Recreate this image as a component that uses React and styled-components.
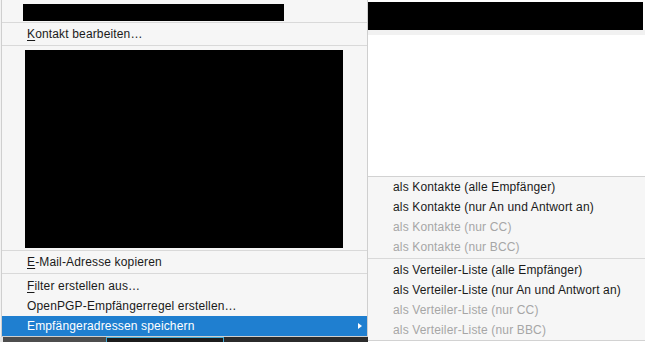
import React from "react";
import styled, { createGlobalStyle } from "styled-components";

const GlobalStyle = createGlobalStyle`
  html, body {
    margin: 0;
    background: #ffffff;
    overflow: hidden;
  }
  body {
    font-family: "Liberation Sans", Arial, sans-serif;
    font-size: 12px;
    letter-spacing: 0.15px;
  }
`;

const Screen = styled.div`
  display: flex;
  width: 645px;
  height: 342px;
  overflow: hidden;
`;

const LeftColumn = styled.div`
  display: flex;
  flex-direction: column;
  width: 368px;
  flex-shrink: 0;
`;

const MenuHolder = styled.div`
  display: flex;
  padding-left: 1px;
  background: #f2f2f2;
`;

const Menu = styled.div`
  box-sizing: border-box;
  width: 367px;
  background: #f6f6f6;
  border: 1px solid #cfcfcf;
  border-top: none;
  display: flex;
  flex-direction: column;
`;

const Item = styled.div`
  display: flex;
  align-items: center;
  height: 20px;
  padding-left: ${(p) => p.$indent || 25}px;
  color: ${(p) => (p.$active ? "#ffffff" : p.$disabled ? "#a6a6a6" : "#1a1a1a")};
  background: ${(p) => (p.$active ? "#1f7fd0" : "transparent")};
  white-space: nowrap;
`;

const Key = styled.span`
  text-decoration: underline;
  text-underline-offset: 2px;
`;

const Arrow = styled.span`
  margin-left: auto;
  margin-right: 5px;
  width: 0;
  height: 0;
  border-left: 4px solid #ffffff;
  border-top: 3px solid transparent;
  border-bottom: 3px solid transparent;
`;

const Separator = styled.div`
  height: 1px;
  margin: 1px 0;
  background: #d9d9d9;
`;

const RedactedRow = styled.div`
  height: 21px;
  box-sizing: border-box;
  padding: 4px 0 0 21px;
`;

const Redacted = styled.div`
  width: ${(p) => p.$w}px;
  height: ${(p) => p.$h}px;
  background: #000000;
`;

const PreviewRow = styled.div`
  padding: 3px 0 1px 23px;
`;

const Group = styled.div`
  padding-top: 1px;
`;

const DarkStrip = styled.div`
  display: flex;
  height: 5px;
  background: #2a2a2a;
`;

const StripPart = styled.div`
  width: ${(p) => p.$w}px;
  background: ${(p) => p.$bg};
  box-sizing: border-box;
  border: ${(p) => (p.$outline ? `1px solid ${p.$outline}` : "none")};
  border-bottom: none;
`;

const RightColumn = styled.div`
  flex: 1;
  display: flex;
  flex-direction: column;
  background: #ffffff;
  min-width: 0;
`;

const CutText = styled.div`
  height: 2px;
  overflow: hidden;
  color: #777777;
  font-size: 12px;
  line-height: 12px;
  padding-left: 4px;
  white-space: nowrap;

  span {
    display: block;
    margin-top: -10px;
  }
`;

const HeaderBar = styled.div`
  height: 28px;
  margin-right: 2px;
  background: #000000;
`;

const HeaderShade = styled.div`
  height: 5px;
  background: #f1f1f1;
`;

const Blank = styled.div`
  height: 141px;
`;

const Submenu = styled.div`
  background: #f6f6f6;
  border-top: 1px solid #d2d2d2;
  border-bottom: 1px solid #d2d2d2;
`;

const saveTargets = [
  { label: "als Kontakte (alle Empfänger)" },
  { label: "als Kontakte (nur An und Antwort an)" },
  { label: "als Kontakte (nur CC)", disabled: true },
  { label: "als Kontakte (nur BCC)", disabled: true },
];

const listTargets = [
  { label: "als Verteiler-Liste (alle Empfänger)" },
  { label: "als Verteiler-Liste (nur An und Antwort an)" },
  { label: "als Verteiler-Liste (nur CC)", disabled: true },
  { label: "als Verteiler-Liste (nur BBC)", disabled: true },
];

const App = () => {
  return (
    <>
      <GlobalStyle />
      <Screen>
        <LeftColumn>
          <MenuHolder>
            <Menu>
              <RedactedRow>
                <Redacted $w={261} $h={17} />
              </RedactedRow>
              <Separator />
              <Item>
                <Key>K</Key>ontakt bearbeiten…
              </Item>
              <Separator />
              <PreviewRow>
                <Redacted $w={318} $h={198} />
              </PreviewRow>
              <Separator />
              <Item>
                <Key>E</Key>-Mail-Adresse kopieren
              </Item>
              <Separator />
              <Group>
                <Item>
                  <Key>F</Key>ilter erstellen aus…
                </Item>
                <Item>OpenPGP-Empfängerregel erstellen…</Item>
                <Item $active>
                  Empfängeradressen speichern
                  <Arrow />
                </Item>
              </Group>
            </Menu>
          </MenuHolder>
          <DarkStrip>
            <StripPart $w={3} $bg="#e6e6e6" />
            <StripPart $w={103} $bg="#4d4d4d" />
            <StripPart $w={118} $bg="#1c1c1c" $outline="#3fa9d6" />
            <StripPart $w={144} $bg="#2b2b2b" />
          </DarkStrip>
        </LeftColumn>
        <RightColumn>
          <CutText>
            <span>Kontakt Sie kürzlich · Kontakt-Ordner · Postfach</span>
          </CutText>
          <HeaderBar />
          <HeaderShade />
          <Blank />
          <Submenu>
            {saveTargets.map((t) => (
              <Item key={t.label} $disabled={t.disabled}>
                {t.label}
              </Item>
            ))}
            <Separator />
            {listTargets.map((t) => (
              <Item key={t.label} $disabled={t.disabled}>
                {t.label}
              </Item>
            ))}
          </Submenu>
        </RightColumn>
      </Screen>
    </>
  );
};

export default App;
